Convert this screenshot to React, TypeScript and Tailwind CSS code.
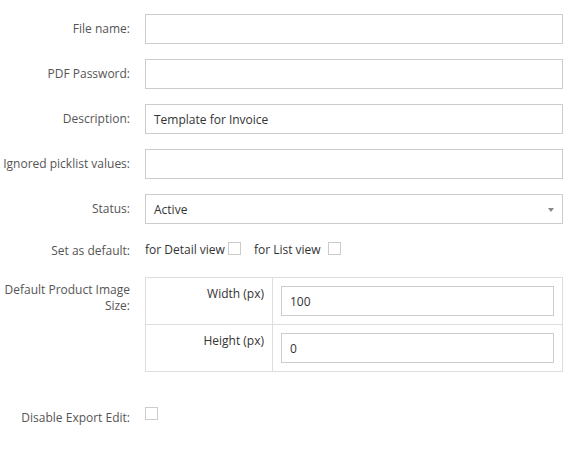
const font = { fontFamily: '"Open Sans", "Liberation Sans", sans-serif' };

function Label({ children, className = "" }: { children: React.ReactNode; className?: string }) {
  return (
    <div className={`text-right text-[12px] leading-4 text-[#555] ${className}`}>{children}</div>
  );
}

function TextField({ value = "" }: { value?: string }) {
  return (
    <div className="flex h-[30px] items-center border border-[#ccc] bg-white px-2 pt-px text-[12px] text-[#333]">
      {value}
    </div>
  );
}

function Box({ className = "" }: { className?: string }) {
  return <span className={`block size-[13px] border border-[#ccc] bg-white ${className}`} />;
}

export default function App() {
  return (
    <div style={font} className="min-h-[468px] w-[574px] bg-white pr-[11px] pt-[14px]">
      <div className="grid grid-cols-[130px_1fr] gap-x-[15px]">
        <Label className="pt-[7px]">File name:</Label>
        <div className="mb-[15px]">
          <TextField />
        </div>

        <Label className="pt-[7px]">PDF Password:</Label>
        <div className="mb-[15px]">
          <TextField />
        </div>

        <Label className="pt-[7px]">Description:</Label>
        <div className="mb-[15px]">
          <TextField value="Template for Invoice" />
        </div>

        <Label className="-ml-2 whitespace-nowrap pt-[7px]">Ignored picklist values:</Label>
        <div className="mb-[15px]">
          <TextField />
        </div>

        <Label className="pt-[7px]">Status:</Label>
        <div className="mb-[15px]">
          <div className="flex h-[30px] items-center justify-between border border-[#ccc] bg-white pl-2 pr-2 pt-px text-[12px] text-[#333]">
            <span>Active</span>
            <span className="h-0 w-0 border-x-[3px] border-t-[4px] border-x-transparent border-t-[#888]" />
          </div>
        </div>

        <Label className="pt-[4px]">Set as default:</Label>
        <div className="mb-[15px] flex h-[23px] items-start pt-[3px] text-[12px] leading-4 text-[#333]">
          <span>for Detail view</span>
          <Box className="ml-[3px]" />
          <span className="ml-[13px]">for List view</span>
          <Box className="ml-[7px]" />
        </div>

        <Label className="pt-[5px]">
          Default Product Image
          <br />
          Size:
        </Label>
        <div className="border border-[#ddd]">
          <div className="grid grid-cols-[127px_1fr]">
            <div className="border-r border-[#ddd] pr-2 pt-[8px] text-right text-[12px] leading-4 text-[#333]">
              Width (px)
            </div>
            <div className="p-2">
              <TextField value="100" />
            </div>
          </div>
          <div className="grid grid-cols-[127px_1fr] border-t border-[#ddd]">
            <div className="border-r border-[#ddd] pr-2 pt-[8px] text-right text-[12px] leading-4 text-[#333]">
              Height (px)
            </div>
            <div className="p-2">
              <TextField value="0" />
            </div>
          </div>
        </div>

        <Label className="mt-[35px] pt-[3px]">Disable Export Edit:</Label>
        <div className="mt-[35px]">
          <Box />
        </div>
      </div>
    </div>
  );
}
